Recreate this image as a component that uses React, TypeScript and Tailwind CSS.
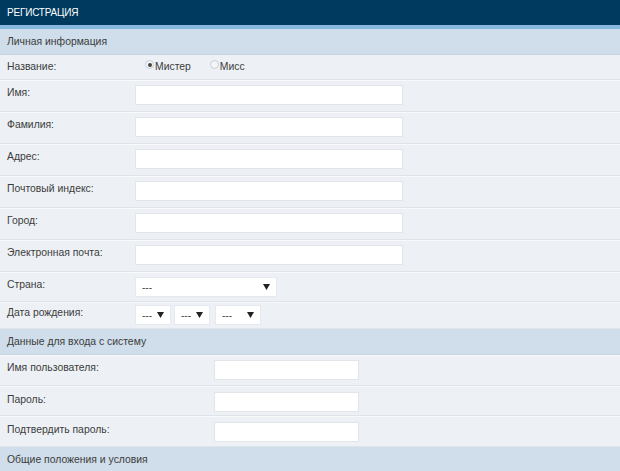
import React from 'react';

const Arrow: React.FC = () => (
  <svg width="7" height="6" viewBox="0 0 7 6" className="shrink-0">
    <path d="M0 0 H7 L3.5 6 Z" fill="#222" />
  </svg>
);

const TextInput: React.FC<{ w: string }> = ({ w }) => (
  <div className={`${w} h-[20px] bg-white border border-[#e1e5ea]`} />
);

const Select: React.FC<{ w: string }> = ({ w }) => (
  <div className={`${w} h-[20px] bg-white border border-[#e6e9ee] flex items-center justify-between pl-[6px] pr-[6px] text-[10px] text-[#444]`}>
    <span>---</span>
    <Arrow />
  </div>
);

const Row: React.FC<{ label: string; h: string; pt: string; children?: React.ReactNode; col: string }> = ({ label, h, pt, children, col }) => (
  <div className={`flex items-start ${h} ${pt} border-b border-[#dfe4e9] shadow-[inset_0_1px_0_#f7f9fb]`}>
    <div className={`${col} shrink-0 pl-[7px] pt-[1px] leading-[14px]`}>{label}</div>
    {children}
  </div>
);

const Section: React.FC<{ title: string }> = ({ title }) => (
  <div className="h-[26px] bg-[#cfdeea] border-b border-[#c4d3e0] flex items-center pl-[7px] text-[#3c3c3c]">{title}</div>
);

const Radio: React.FC<{ checked?: boolean }> = ({ checked }) => (
  <span className="inline-flex w-[9px] h-[9px] rounded-full border border-[#c9ced4] bg-[#f4f5f7] items-center justify-center mr-[1px] -mt-[4px]">
    {checked && <span className="w-[4px] h-[4px] rounded-full bg-[#444]" />}
  </span>
);

export default function App() {
  const fields = ['Имя:', 'Фамилия:', 'Адрес:', 'Почтовый индекс:', 'Город:', 'Электронная почта:'];
  return (
    <div className="w-[620px] h-[471px] overflow-hidden bg-[#edf1f5] text-[10.4px] text-[#3c3c3c]" style={{ fontFamily: '"Liberation Sans", Arial, sans-serif' }}>
      <div className="h-[25px] bg-[#003a5e] text-white flex items-center pl-[7px] text-[10px] tracking-[-0.2px]">РЕГИСТРАЦИЯ</div>
      <div className="h-[4px] bg-[#86b8e2]" />
      <Section title="Личная информация" />
      <div className="flex items-center h-[25px] border-b border-[#dfe4e9]">
        <div className="w-[145px] shrink-0 pl-[7px]">Название:</div>
        <label className="flex items-center"><Radio checked /><span>Мистер</span></label>
        <label className="flex items-center ml-[19px]"><Radio /><span>Мисс</span></label>
      </div>
      {fields.map((f) => (
        <Row key={f} label={f} h="h-[32px]" pt="pt-[5px]" col="w-[135px]">
          <TextInput w="w-[268px]" />
        </Row>
      ))}
      <Row label="Страна:" h="h-[30px]" pt="pt-[5px]" col="w-[135px]">
        <Select w="w-[142px]" />
      </Row>
      <Row label="Дата рождения:" h="h-[27px]" pt="pt-[3px]" col="w-[135px]">
        <div className="flex gap-[3px]">
          <Select w="w-[36px]" />
          <Select w="w-[36px]" />
          <div className="ml-[2px]"><Select w="w-[46px]" /></div>
        </div>
      </Row>
      <Section title="Данные для входа с систему" />
      <Row label="Имя пользователя:" h="h-[31px]" pt="pt-[5px]" col="w-[214px]">
        <TextInput w="w-[145px]" />
      </Row>
      <Row label="Пароль:" h="h-[30px]" pt="pt-[6px]" col="w-[214px]">
        <TextInput w="w-[145px]" />
      </Row>
      <Row label="Подтвердить пароль:" h="h-[31px]" pt="pt-[6px]" col="w-[214px]">
        <TextInput w="w-[145px]" />
      </Row>
      <Section title="Общие положения и условия" />
    </div>
  );
}
